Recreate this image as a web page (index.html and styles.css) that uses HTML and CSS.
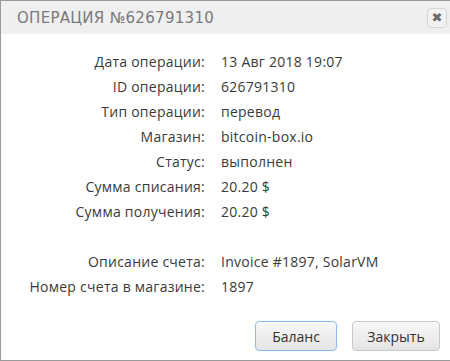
FILE: index.html
```html
<!DOCTYPE html>
<html lang="ru">
<head>
  <meta charset="UTF-8" />
  <title>Операция №626791310</title>
  <link rel="stylesheet" href="styles.css">
</head>
<body>
  <div class="dialog">
    <div class="dialog-header">
      <span class="dialog-title">Операция №626791310</span>
      <button class="dialog-close" title="Закрыть">&#10006;</button>
    </div>
    <div class="dialog-body">
      <div class="details">
        <span class="label">Дата операции:</span><span class="value">13 Авг 2018 19:07</span>
        <span class="label">ID операции:</span><span class="value">626791310</span>
        <span class="label">Тип операции:</span><span class="value">перевод</span>
        <span class="label">Магазин:</span><span class="value">bitcoin-box.io</span>
        <span class="label">Статус:</span><span class="value">выполнен</span>
        <span class="label">Сумма списания:</span><span class="value">20.20 $</span>
        <span class="label">Сумма получения:</span><span class="value">20.20 $</span>
        <span class="spacer"></span><span class="spacer"></span>
        <span class="label">Описание счета:</span><span class="value">Invoice #1897, SolarVM</span>
        <span class="label">Номер счета в магазине:</span><span class="value">1897</span>
      </div>
    </div>
    <div class="dialog-buttons">
      <button class="btn btn-focus">Баланс</button>
      <button class="btn btn-close">Закрыть</button>
    </div>
  </div>
</body>
</html>
```
FILE: styles.css
```css
body { margin: 0; background: #fff; font-family: "Open Sans", sans-serif; }
.dialog {
  height: 359px;
  border: 1px solid #9a9a9a;
  border-right: none;
  background: #fff;
  display: flex;
  flex-direction: column;
}
.dialog-header {
  display: flex;
  justify-content: space-between;
  align-items: center;
  height: 33px;
  background: #efefef;
  padding: 0 3px 0 16px;
}
.dialog-title {
  color: #7a7a7a;
  font-family: "DejaVu Sans", sans-serif;
  font-size: 15px;
  letter-spacing: 0.3px;
  text-transform: uppercase;
}
.dialog-close {
  width: 20px;
  height: 20px;
  padding: 0;
  border: 1px solid #d6d6d6;
  border-radius: 4px;
  background: #f2f2f2;
  color: #6a6a6a;
  font-family: "DejaVu Sans", sans-serif;
  font-size: 13px;
  font-weight: bold;
  line-height: 18px;
  cursor: pointer;
}
.dialog-body { padding: 15px 0 0; flex: 1; }
.details {
  display: grid;
  grid-template-columns: 204px auto;
  grid-auto-rows: 25px;
  column-gap: 16px;
  align-items: center;
  font-size: 14px;
  letter-spacing: 0.25px;
  color: #3a3a3a;
}
.label { text-align: right; }
.dialog-buttons {
  display: flex;
  justify-content: flex-end;
  gap: 15px;
  padding: 0 10px 9px 0;
}
.btn {
  height: 30px;
  padding: 0;
  border: 1px solid #c8c8c8;
  border-radius: 4px;
  background: linear-gradient(#f8f8f8, #e4e4e4);
  color: #333;
  font-family: "Open Sans", sans-serif;
  font-size: 14px;
  cursor: pointer;
}
.btn-focus { border-color: #8fb6ef; width: 82px; }
.btn-close { width: 88px; }
```
